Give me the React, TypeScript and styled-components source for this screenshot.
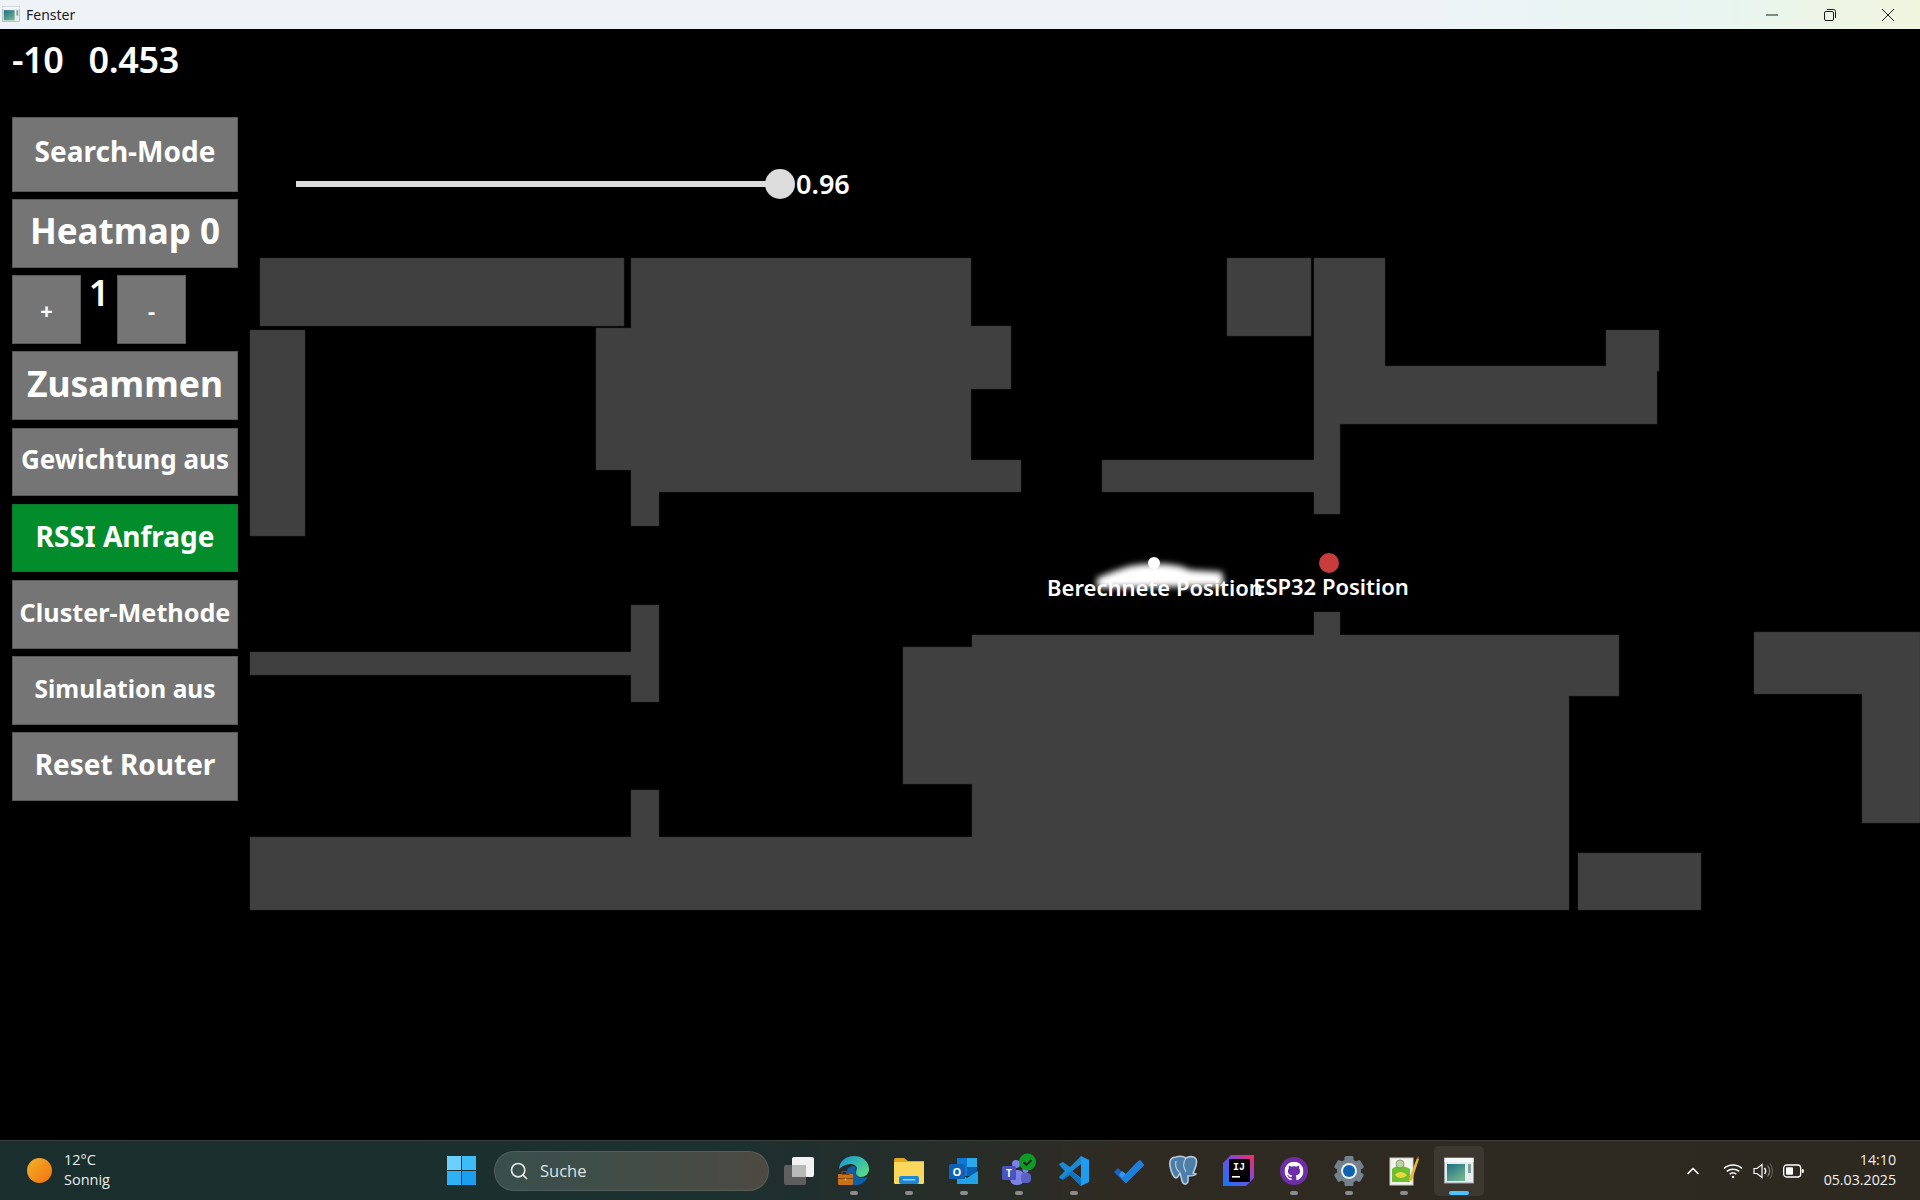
import React from 'react';
import styled, { createGlobalStyle } from 'styled-components';
import { SiGithub } from 'react-icons/si';
import { Search, ChevronUp } from 'lucide-react';

const GlobalStyle = createGlobalStyle`
  html, body {
    margin: 0;
    padding: 0;
    background: #000;
  }
  * {
    box-sizing: border-box;
  }
`;

const Page = styled.div`
  width: 1920px;
  height: 1200px;
  display: flex;
  flex-direction: column;
  overflow: hidden;
  font-family: 'Noto Sans', 'Open Sans', sans-serif;
`;

const TitleBar = styled.div`
  height: 29px;
  flex: none;
  display: flex;
  align-items: center;
  padding: 0 3px 0 2px;
  background: linear-gradient(90deg, #eef3f8 0%, #eef3f8 72%, #e8f5f0 90%, #f1f5de 100%);
  color: #1a1a1a;
  font-size: 14px;
`;

const TitleText = styled.span`
  margin-left: 6px;
  flex: 1;
`;

const WindowControl = styled.div`
  width: 58px;
  height: 29px;
  display: flex;
  align-items: center;
  justify-content: center;
`;

const Main = styled.div`
  flex: 1;
  position: relative;
  display: flex;
  background: #000;
`;

const FloorPlan = styled.svg`
  position: absolute;
  left: 0;
  top: 0;
`;

const Sidebar = styled.div`
  position: relative;
  width: 238px;
  flex: none;
  padding-left: 12px;
  display: flex;
  flex-direction: column;
`;

const Readout = styled.div`
  height: 87.5px;
  padding-top: 9px;
  display: flex;
  gap: 25px;
  color: #fff;
  font-size: 36px;
  line-height: 44px;
  font-weight: 600;
  letter-spacing: -0.4px;
`;

const ButtonStack = styled.div`
  width: 226px;
  display: flex;
  flex-direction: column;
  gap: 7.6px;
`;

const ToolButton = styled.div<{ $size: number; $tall?: boolean; $active?: boolean }>`
  height: ${(p) => (p.$tall ? '75px' : '68.6px')};
  padding-bottom: ${(p) => (p.$tall ? '7px' : '5px')};
  display: flex;
  align-items: center;
  justify-content: center;
  white-space: nowrap;
  background: ${(p) => (p.$active ? '#038c2b' : '#757575')};
  border: 1px solid ${(p) => (p.$active ? '#0b7a2c' : '#5a5a5a')};
  color: #fff;
  font-size: ${(p) => p.$size}px;
  font-weight: 700;
`;

const CounterRow = styled.div`
  display: flex;
`;

const CounterButton = styled(ToolButton)`
  width: 69px;
  padding-bottom: 0;
`;

const CounterValue = styled.div`
  width: 36px;
  text-align: center;
  color: #fff;
  font-size: 36px;
  line-height: 36px;
  font-weight: 600;
`;

const Stage = styled.div`
  position: relative;
  flex: 1;
  padding: 140px 0 0 58px;
`;

const SliderRow = styled.div`
  display: flex;
  align-items: center;
  height: 30px;
`;

const SliderTrack = styled.div`
  position: relative;
  width: 484px;
  height: 6px;
  background: #dcdcdc;
`;

const SliderThumb = styled.div`
  position: absolute;
  right: -15px;
  top: -12px;
  width: 30px;
  height: 30px;
  border-radius: 50%;
  background: #dcdcdc;
`;

const SliderValue = styled.span`
  margin: -2px 0 0 16px;
  color: #fff;
  font-size: 27px;
  font-weight: 600;
`;

const MarkerLabel = styled.text`
  fill: #fff;
  font-family: 'Noto Sans', 'Open Sans', sans-serif;
  font-size: 22px;
  font-weight: 600;
  text-anchor: middle;
`;

const Taskbar = styled.div`
  height: 60px;
  flex: none;
  display: flex;
  align-items: center;
  border-top: 1px solid #3c403c;
  background: linear-gradient(90deg, #1b2e2e 0%, #1c3030 38%, #2f2b23 58%, #2d2820 100%);
  color: #fff;
  font-family: 'Open Sans', 'Noto Sans', sans-serif;
`;

const Weather = styled.div`
  width: 447px;
  flex: none;
  padding-left: 27px;
  display: flex;
  align-items: center;
  gap: 12px;
`;

const Sun = styled.div`
  width: 25px;
  height: 25px;
  border-radius: 50%;
  background: linear-gradient(135deg, #f0b429, #f3700f);
`;

const WeatherText = styled.div`
  margin-top: -2px;
  font-size: 14.5px;
  line-height: 20px;
  color: #e8ecec;
`;

const SearchBox = styled.div`
  width: 275px;
  height: 40px;
  margin-left: 18px;
  padding-left: 14px;
  display: flex;
  align-items: center;
  gap: 11px;
  border-radius: 20px;
  border: 1px solid rgba(255, 255, 255, 0.1);
  background: linear-gradient(90deg, #394f4c, #4c4a42);
  color: #dfe3e1;
  font-size: 16.5px;
`;

const AppIcons = styled.div`
  display: flex;
  margin-left: 2px;
`;

const AppSlot = styled.div<{ $active?: boolean }>`
  position: relative;
  width: 55px;
  height: 50px;
  display: flex;
  align-items: center;
  justify-content: center;
  &::before {
    content: '';
    position: absolute;
    inset: 0 2.5px;
    border-radius: 5px;
    background: ${(p) => (p.$active ? 'rgba(255, 255, 255, 0.07)' : 'transparent')};
  }
  & > svg {
    position: relative;
  }
`;

const RunDot = styled.div<{ $active?: boolean }>`
  position: absolute;
  left: 50%;
  bottom: 1px;
  transform: translateX(-50%);
  width: ${(p) => (p.$active ? '20px' : '8px')};
  height: 4px;
  border-radius: 2px;
  background: ${(p) => (p.$active ? '#4cc2ff' : '#8c8c8c')};
`;

const Tray = styled.div`
  flex: 1;
  display: flex;
  align-items: center;
  justify-content: flex-end;
  padding-right: 24px;
`;

const TrayIcons = styled.div`
  display: flex;
  align-items: center;
  gap: 10px;
  margin-right: 20px;
`;

const TrayChevron = styled(ChevronUp)`
  margin-right: 10px;
`;

const Clock = styled.div`
  margin-top: -1px;
  text-align: right;
  font-size: 14.2px;
  line-height: 20px;
  color: #f0f0f0;
`;

const WindowGlyph = ({ size }: { size: number }) => (
  <svg width={size} height={size * 0.9} viewBox="0 0 30 27">
    <defs>
      <linearGradient id={`win${size}`} x1="0" y1="0" x2="0.7" y2="1">
        <stop offset="0" stopColor="#1f6d86" />
        <stop offset="1" stopColor="#6fb48c" />
      </linearGradient>
    </defs>
    <rect x="0.5" y="1" width="29" height="25" fill="#e8ecef" stroke="#9aa4ac" />
    <rect x="0.5" y="1" width="29" height="4" fill="#f7f8f9" />
    <rect x="3" y="7" width="18" height="17" fill={`url(#win${size})`} />
    <rect x="24" y="7" width="3" height="9" fill="#7fa39a" />
  </svg>
);

const WinLogo = () => (
  <svg width="29" height="29" viewBox="0 0 29 29">
    <rect width="14" height="14" fill="#6bd0fb" />
    <rect x="15" width="14" height="14" fill="#3cbdf8" />
    <rect y="15" width="14" height="14" fill="#2fb2f5" />
    <rect x="15" y="15" width="14" height="14" fill="#1a9ef0" />
  </svg>
);

const TaskView = () => (
  <svg width="30" height="30" viewBox="0 0 30 30">
    <rect x="0" y="9" width="22" height="20" rx="2" fill="#5f5f5f" />
    <rect x="8" y="1" width="22" height="20" rx="2" fill="#f2f2f2" />
    <rect x="8" y="9" width="14" height="12" fill="#b9b9b9" />
  </svg>
);

const EdgeIcon = () => (
  <svg width="32" height="32" viewBox="0 0 32 32">
    <defs>
      <linearGradient id="edgeA" x1="0" y1="0" x2="1" y2="0.8">
        <stop offset="0" stopColor="#1493d8" />
        <stop offset="1" stopColor="#58dc84" />
      </linearGradient>
    </defs>
    <path d="M1 15C1 6 8 1 16 1c9 0 15 6 15 13 0 5-4 8-8 8-3 0-5-2-5-4 0-3 1-4 1-5-1-3-4-4-6-4-6 0-12 4-12 6z" fill="url(#edgeA)" />
    <path d="M8 18c1-5 6-8 10-6-2 5 0 11 6 11 3 0 5-1 6-2-2 6-8 10-14 9-6-2-9-7-8-12z" fill="#0e5ea8" />
    <rect x="0" y="19" width="15" height="11" rx="1" fill="#c8701a" />
    <rect x="0" y="23" width="15" height="1" fill="#8a4708" />
    <rect x="4" y="16.5" width="7" height="3" fill="none" stroke="#8a4708" />
    <circle cx="7.5" cy="24.5" r="1" fill="#f5c04a" />
  </svg>
);

const FolderIcon = () => (
  <svg width="32" height="28" viewBox="0 0 32 28">
    <path d="M1 3a2 2 0 0 1 2-2h8l4 3h16v5H1z" fill="#e5a823" />
    <rect x="1" y="5" width="30" height="22" rx="1" fill="#fbd75b" />
    <rect x="6" y="19" width="20" height="8" rx="2" fill="#1e88d2" />
    <rect x="10" y="22" width="12" height="1.5" fill="#8fd0f5" />
  </svg>
);

const OutlookIcon = () => (
  <svg width="30" height="28" viewBox="0 0 30 28">
    <rect x="8" y="1" width="20" height="18" fill="#0f78d4" />
    <rect x="18" y="1" width="10" height="9" fill="#29a8ea" />
    <rect x="18" y="10" width="10" height="9" fill="#0a5fae" />
    <path d="M8 14l10 7 11-7v13H8z" fill="#1fa2e8" />
    <rect x="0" y="7" width="16" height="15" rx="1.5" fill="#0d62b8" />
    <text x="8" y="18.5" fontSize="11" fontWeight="700" fill="#fff" textAnchor="middle" fontFamily="Open Sans, sans-serif">
      O
    </text>
  </svg>
);

const TeamsIcon = () => (
  <svg width="36" height="36" viewBox="0 0 36 36">
    <circle cx="15" cy="11" r="4" fill="#7b83eb" />
    <circle cx="24.5" cy="17" r="3" fill="#7b83eb" />
    <rect x="9" y="17" width="14" height="15" rx="6" fill="#7b83eb" />
    <rect x="20" y="20" width="10" height="10" rx="4" fill="#5b62c4" />
    <rect x="1" y="13" width="14" height="14" rx="1.5" fill="#4b53bc" />
    <text x="8" y="24" fontSize="10" fontWeight="700" fill="#fff" textAnchor="middle" fontFamily="Open Sans, sans-serif">
      T
    </text>
    <circle cx="26.5" cy="9" r="8.5" fill="#0f9c26" />
    <path d="M22.5 9l3 3 5-5" stroke="#10240f" strokeWidth="1.8" fill="none" />
  </svg>
);

const VsCodeIcon = () => (
  <svg width="30" height="30" viewBox="0 0 30 30">
    <path d="M22 0l8 4v22l-8 4-12-12z" fill="#1f9cf0" />
    <path d="M22 8v14l-9-7z" fill="#2d2820" />
    <path d="M0 9l3-2 19 16v7L11 19l-7 5-4-2 6-7z" fill="#0e74bf" />
    <path d="M0 21l3 2 19-16V0L11 11 4 6 0 8l6 7z" fill="#1a8ad6" />
  </svg>
);

const TodoIcon = () => (
  <svg width="30" height="24" viewBox="0 0 30 24">
    <path d="M0 13l4-4 7 7-4 4z" fill="#1b62c4" />
    <path d="M5 16l7 8L30 6l-4-5-14 14-4-3z" fill="#2e9bf0" />
    <path d="M12 24l-5-4L22 4l4-3 4 5z" fill="#1b7fe0" />
  </svg>
);

const PostgresIcon = () => (
  <svg width="31" height="31" viewBox="0 0 31 31">
    <path
      d="M8 2C3 2 1 6 2 11c1 5 3 11 6 12 2 0 3-3 4-5 1 2 1 7 3 10 2 2 5 1 5-2v-5c3 0 7 0 8-2l-3-1c2-4 5-10 3-14-2-3-7-3-10-1-3-2-7-2-10-1z"
      fill="#4d7ea8"
      stroke="#b6cbdd"
      strokeWidth="1.6"
    />
    <path d="M18 3c-3 4-3 9 0 14M8 6c-1 4 0 8 3 11" fill="none" stroke="#b6cbdd" strokeWidth="1.2" />
  </svg>
);

const IdeaIcon = () => (
  <svg width="31" height="31" viewBox="0 0 31 31">
    <defs>
      <linearGradient id="ideaA" x1="0" y1="1" x2="1" y2="0">
        <stop offset="0" stopColor="#087cfa" />
        <stop offset="0.55" stopColor="#7a4be0" />
        <stop offset="1" stopColor="#fe2857" />
      </linearGradient>
    </defs>
    <path d="M8 0h23v23l-8 8H0V8z" fill="url(#ideaA)" />
    <rect x="6" y="4" width="21" height="23" fill="#000" />
    <text x="16" y="15" fontSize="10" fontWeight="700" fill="#fff" textAnchor="middle" fontFamily="Liberation Mono, monospace">
      IJ
    </text>
    <rect x="9" y="21" width="8" height="1.6" fill="#fff" />
  </svg>
);

const GithubIcon = () => (
  <svg width="30" height="30" viewBox="0 0 30 30">
    <circle cx="15" cy="15" r="14" fill="#6f2da8" />
    <g transform="translate(5.5 5.5)">
      <SiGithub size={19} color="#fff" />
    </g>
  </svg>
);

const SettingsIcon = () => (
  <svg width="32" height="32" viewBox="0 0 32 32">
    {[0, 60, 120, 180, 240, 300].map((a) => (
      <rect key={a} x="11.5" y="1" width="9" height="8" rx="1.5" fill="#75818c" transform={`rotate(${a} 16 16)`} />
    ))}
    <circle cx="16" cy="16" r="12" fill="#75818c" />
    <circle cx="16" cy="16" r="8" fill="#e8eef2" />
    <circle cx="16" cy="16" r="6" fill="#0f62b0" />
  </svg>
);

const NotepadIcon = () => (
  <svg width="30" height="32" viewBox="0 0 30 32">
    <rect x="1" y="3" width="23" height="27" fill="#f1f3ec" stroke="#c8ccc2" />
    <path d="M3 14c4-4 12-4 18 0v13H3z" fill="#6fbf30" />
    <circle cx="11" cy="9" r="4" fill="#b8d89a" stroke="#666" strokeWidth="0.6" />
    <path d="M6 20c3-4 8-4 12 0-3 4-9 4-12 0z" fill="#e9d93e" />
    <path d="M20 24L28 3l2 1-7 21-3 2z" fill="#e8b92e" />
    <path d="M28 3l1-2 1.2.8-.2 2.2z" fill="#a8442c" />
  </svg>
);

const WifiIcon = () => (
  <svg width="20" height="16" viewBox="0 0 20 16" fill="none" stroke="#fff" strokeWidth="1.5">
    <path d="M1 5.5c5-4.6 13-4.6 18 0" />
    <path d="M3.8 8.4c3.4-3 9-3 12.4 0" />
    <path d="M6.7 11.1c2-1.6 4.6-1.6 6.6 0" />
    <circle cx="10" cy="14" r="1.2" fill="#fff" stroke="none" />
  </svg>
);

const VolumeIcon = () => (
  <svg width="20" height="18" viewBox="0 0 20 18" fill="none" stroke="#fff" strokeWidth="1.2">
    <path d="M1 6.5h3l5-4v13l-5-4H1z" />
    <path d="M11.5 6c1.4 1.8 1.4 4.2 0 6" strokeWidth="1.5" />
    <path d="M14.5 3.5c2.6 3.3 2.6 7.7 0 11" stroke="#8a8a86" />
    <path d="M17 1.5c3.3 4.5 3.3 10.5 0 15" stroke="#5e5c58" />
  </svg>
);

const BatteryIcon = () => (
  <svg width="21" height="14" viewBox="0 0 21 14">
    <rect x="0.7" y="1" width="17" height="12" rx="3" fill="none" stroke="#fff" strokeWidth="1.3" />
    <rect x="3" y="3.3" width="7" height="7.4" rx="1" fill="#fff" />
    <rect x="18.8" y="5" width="2" height="4" rx="1" fill="#fff" />
  </svg>
);

const rooms: string[] = [
  '260,258 624,258 624,326 260,326',
  '250,330 305,330 305,536 250,536',
  '631,258 971,258 971,326 1011,326 1011,389 971,389 971,460 1021,460 1021,492 659,492 659,526 631,526 631,470 596,470 596,328 631,328',
  '1227,258 1311,258 1311,336 1227,336',
  '1314,258 1385,258 1385,366 1606,366 1606,330 1659,330 1659,371 1657,371 1657,424 1340,424 1340,514 1314,514 1314,492 1102,492 1102,460 1314,460',
  '631,605 659,605 659,702 631,702 631,675 250,675 250,652 631,652',
  '1314,612 1340,612 1340,635 1619,635 1619,696 1569,696 1569,910 250,910 250,837 631,837 631,790 659,790 659,837 972,837 972,784 903,784 903,647 972,647 972,635 1314,635',
  '1578,853 1701,853 1701,910 1578,910',
  '1754,632 1920,632 1920,823 1862,823 1862,694 1754,694',
];

const apps: { icon: React.ReactElement; running?: boolean; active?: boolean }[] = [
  { icon: <TaskView /> },
  { icon: <EdgeIcon />, running: true },
  { icon: <FolderIcon />, running: true },
  { icon: <OutlookIcon />, running: true },
  { icon: <TeamsIcon />, running: true },
  { icon: <VsCodeIcon />, running: true },
  { icon: <TodoIcon /> },
  { icon: <PostgresIcon /> },
  { icon: <IdeaIcon /> },
  { icon: <GithubIcon />, running: true },
  { icon: <SettingsIcon />, running: true },
  { icon: <NotepadIcon />, running: true },
  { icon: <WindowGlyph size={30} />, running: true, active: true },
];

function App(): React.ReactElement {
  return (
    <Page>
      <GlobalStyle />
      <TitleBar>
        <WindowGlyph size={18} />
        <TitleText>Fenster</TitleText>
        <WindowControl>
          <svg width="12" height="12" viewBox="0 0 12 12">
            <path d="M0 6h12" stroke="#1a1a1a" strokeWidth="1" />
          </svg>
        </WindowControl>
        <WindowControl>
          <svg width="12" height="12" viewBox="0 0 12 12" fill="none" stroke="#1a1a1a">
            <rect x="0.5" y="2.5" width="9" height="9" rx="1.5" />
            <path d="M3 0.5h6.5a2 2 0 0 1 2 2V9" />
          </svg>
        </WindowControl>
        <WindowControl>
          <svg width="12" height="12" viewBox="0 0 12 12">
            <path d="M0 0l12 12M12 0L0 12" stroke="#1a1a1a" strokeWidth="1" />
          </svg>
        </WindowControl>
      </TitleBar>
      <Main>
        <FloorPlan width="1920" height="1111" viewBox="0 29 1920 1111">
          <defs>
            <filter id="heat" x="-30%" y="-100%" width="160%" height="300%">
              <feGaussianBlur stdDeviation="3" />
            </filter>
          </defs>
          {rooms.map((points) => (
            <polygon key={points} points={points} fill="#404040" stroke="#333" strokeWidth="0.5" />
          ))}
          <polygon
            points="1097,578 1112,572 1130,566 1145,564 1165,564 1180,566 1190,570 1222,572 1224,586 1097,588"
            fill="#fff"
            filter="url(#heat)"
          />
          <circle cx="1154" cy="563" r="6" fill="#fff" />
          <circle cx="1329" cy="563" r="10" fill="#c93c3c" />
          <MarkerLabel x="1155" y="596">Berechnete Position</MarkerLabel>
          <MarkerLabel x="1331" y="595">ESP32 Position</MarkerLabel>
        </FloorPlan>
        <Sidebar>
          <Readout>
            <span>-10</span>
            <span>0.453</span>
          </Readout>
          <ButtonStack>
            <ToolButton $tall $size={28}>Search-Mode</ToolButton>
            <ToolButton $size={35}>Heatmap 0</ToolButton>
            <CounterRow>
              <CounterButton $size={22}>+</CounterButton>
              <CounterValue>1</CounterValue>
              <CounterButton $size={22}>-</CounterButton>
            </CounterRow>
            <ToolButton $size={35.5}>Zusammen</ToolButton>
            <ToolButton $size={26}>Gewichtung aus</ToolButton>
            <ToolButton $active $size={28}>RSSI Anfrage</ToolButton>
            <ToolButton $size={25.2}>Cluster-Methode</ToolButton>
            <ToolButton $size={24.5}>Simulation aus</ToolButton>
            <ToolButton $size={28}>Reset Router</ToolButton>
          </ButtonStack>
        </Sidebar>
        <Stage>
          <SliderRow>
            <SliderTrack>
              <SliderThumb />
            </SliderTrack>
            <SliderValue>0.96</SliderValue>
          </SliderRow>
        </Stage>
      </Main>
      <Taskbar>
        <Weather>
          <Sun />
          <WeatherText>
            12°C
            <br />
            Sonnig
          </WeatherText>
        </Weather>
        <WinLogo />
        <SearchBox>
          <Search size={20} color="#e6e6e6" strokeWidth={2} />
          Suche
        </SearchBox>
        <AppIcons>
          {apps.map((app, i) => (
            <AppSlot key={i} $active={app.active}>
              {app.icon}
              {app.running && <RunDot $active={app.active} />}
            </AppSlot>
          ))}
        </AppIcons>
        <Tray>
          <TrayIcons>
            <TrayChevron size={20} color="#fff" />
            <WifiIcon />
            <VolumeIcon />
            <BatteryIcon />
          </TrayIcons>
          <Clock>
            14:10
            <br />
            05.03.2025
          </Clock>
        </Tray>
      </Taskbar>
    </Page>
  );
}

export default App;
